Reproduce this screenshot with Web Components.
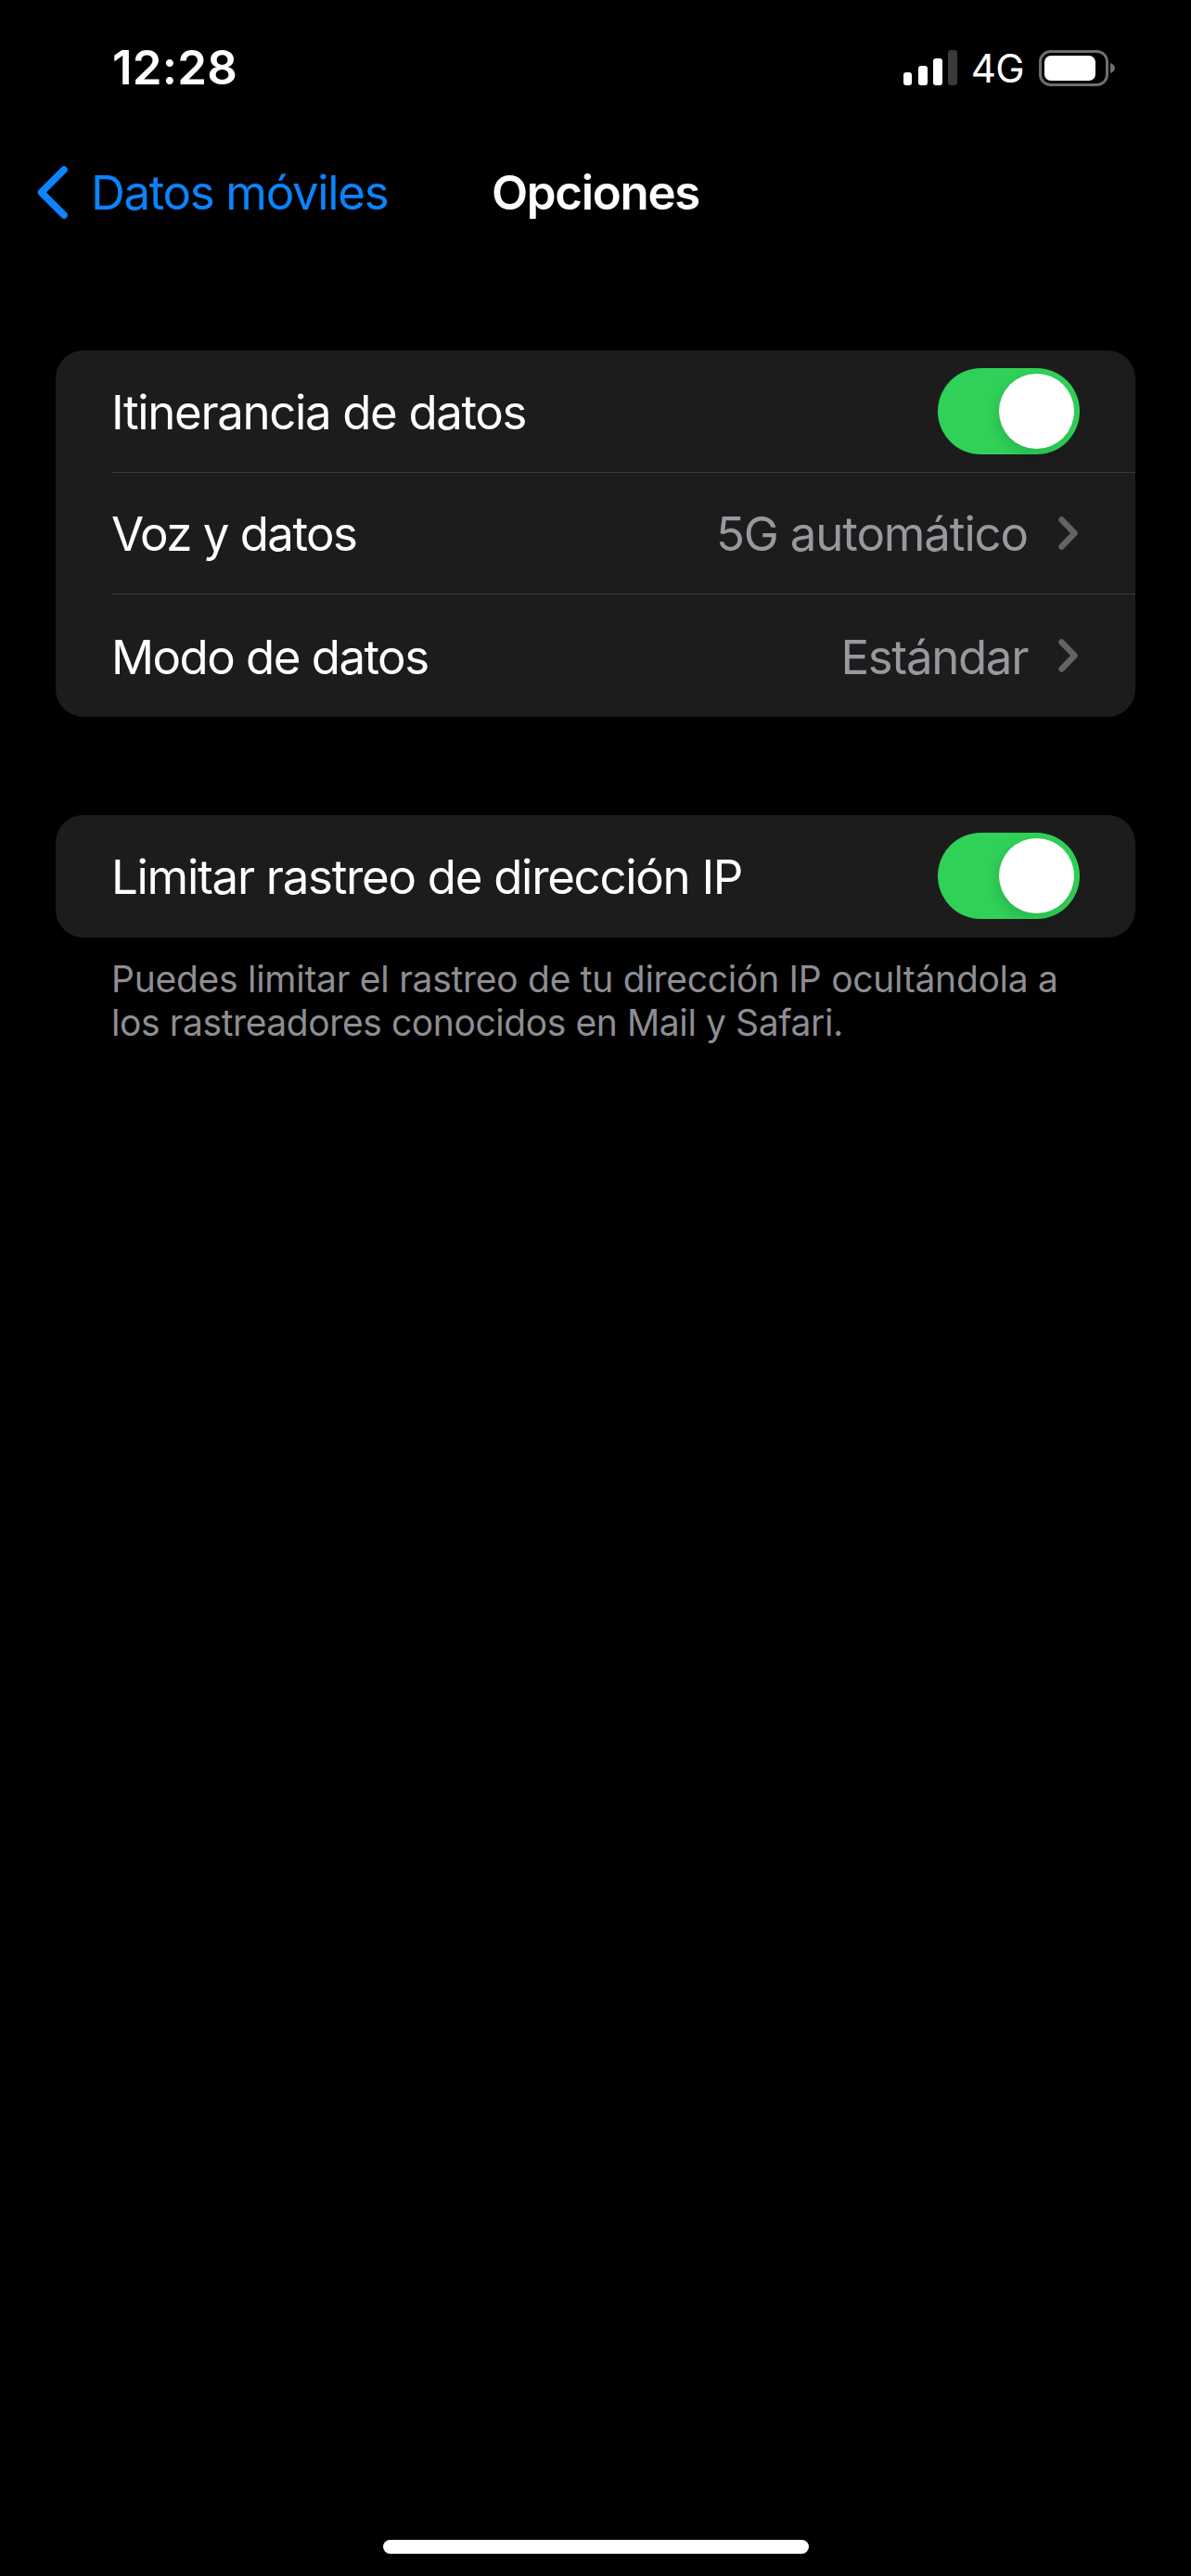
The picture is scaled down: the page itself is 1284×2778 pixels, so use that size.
<!DOCTYPE html>
<html lang="es">
<head>
<meta charset="utf-8">
<title>Opciones</title>
<style>
  html, body { margin: 0; background: #000; }
  body { font-family: Inter, "Noto Sans", sans-serif; color: #fff; }
  #page { display: flex; flex-direction: column; min-height: 2778px; }
</style>
</head>
<body>
<div id="page">
  <status-bar time="12:28" network="4G"></status-bar>
  <nav-bar back="Datos móviles" heading="Opciones"></nav-bar>

  <settings-group style="margin-top:142px">
    <settings-row tracking="-1.38"><span slot="label">Itinerancia de datos</span><on-toggle></on-toggle></settings-row>
    <settings-row tracking="-1.55" value="5G automático" value-tracking="-1.15"><span slot="label">Voz y datos</span></settings-row>
    <settings-row tracking="-1.55" value="Estándar" value-tracking="-1.35"><span slot="label">Modo de datos</span></settings-row>
  </settings-group>

  <settings-group style="margin-top:106px">
    <settings-row tracking="-1.31"><span slot="label">Limitar rastreo de dirección IP</span><on-toggle></on-toggle></settings-row>
  </settings-group>
  <group-note>
    <div style="letter-spacing:-.27px">Puedes limitar el rastreo de tu dirección IP ocultándola a</div>
    <div style="letter-spacing:-.41px">los rastreadores conocidos en Mail y Safari.</div>
  </group-note>

  <home-indicator></home-indicator>
</div>

<script>
class StatusBar extends HTMLElement {
    connectedCallback() {
        this.attachShadow({mode:"open"}).innerHTML = `
        <style>
        :host {
            display: flex;
            align-items: center;
            justify-content: space-between;
            height: 60px;
            padding: 43px 82px 0 121px;
        }
        .time { font-size: 51px; font-weight: 600; letter-spacing: .2px; line-height: 60px; }
        .right { display: flex; align-items: center; }
        .net { font-size: 42px; letter-spacing: -.6px; line-height: 60px; margin: 1px 16px 0 15px; }
        svg { display: block; }
        </style>
        <span class="time">${this.getAttribute("time")}</span>
        <div class="right">
            <svg width="58" height="38" viewBox="0 0 58 38">
                <rect x="0" y="24" width="9" height="14" rx="3" fill="#fff"/>
                <rect x="16" y="17" width="10" height="21" rx="3" fill="#fff"/>
                <rect x="32" y="9" width="10" height="29" rx="3" fill="#fff"/>
                <rect x="48" y="0" width="10" height="38" rx="3" fill="#3a3a3c"/>
            </svg>
            <span class="net">${this.getAttribute("network")}</span>
            <svg width="82" height="39" viewBox="0 0 82 39">
                <rect x="1.5" y="1.5" width="72" height="36" rx="11" fill="none" stroke="#6e6e6e" stroke-width="3"/>
                <rect x="6" y="6" width="55" height="27" rx="7" fill="#fff"/>
                <path d="M77 14c3 1 5 3 5 5.5s-2 4.500-5 5.500z" fill="#6e6e6e"/>
            </svg>
        </div>`;
    }
}

class NavBar extends HTMLElement {
    connectedCallback() {
        this.attachShadow({mode:"open"}).innerHTML = `
        <style>
        :host {
            display: grid;
            grid-template-columns: 1fr auto 1fr;
            align-items: center;
            margin-top: 73px;
            height: 60px;
            font-size: 51px;
            line-height: 60px;
        }
        .back {
            display: flex;
            align-items: center;
            gap: 25px;
            padding-left: 40px;
            color: #0a84ff;
            letter-spacing: -1.35px;
            white-space: nowrap;
        }
        .back span { padding-top: 2px; }
        h1 { margin: 0; padding-top: 2px; font: inherit; font-weight: 600; letter-spacing: -1.3px; }
        svg { display: block; flex: none; }
        </style>
        <div class="back">
            <svg width="33" height="57" viewBox="0 0 33 57">
                <path d="M29 4 4.500 28.500 29 53" fill="none" stroke="#0a84ff" stroke-width="7.500" stroke-linecap="round" stroke-linejoin="round"/>
            </svg>
            <span>${this.getAttribute("back")}</span>
        </div>
        <h1>${this.getAttribute("heading")}</h1>
        <span></span>`;
    }
}

class SettingsGroup extends HTMLElement {
    connectedCallback() {
        this.attachShadow({mode:"open"}).innerHTML = `
        <style>
        :host {
            display: block;
            margin: 0 60px;
            border-radius: 30px;
            overflow: hidden;
            background: #1c1c1d;
        }
        </style>
        <slot></slot>`;
    }
}

class SettingsRow extends HTMLElement {
    connectedCallback() {
        const value = this.getAttribute("value");
        this.attachShadow({mode:"open"}).innerHTML = `
        <style>
        :host {
            display: block;
            height: 131.67px;
            padding-left: 60px;
            font-size: 51px;
            line-height: 60px;
        }
        .inner {
            box-sizing: border-box;
            height: 100%;
            display: flex;
            align-items: center;
            justify-content: space-between;
            padding-right: 60px;
            border-bottom: 1.5px solid #38383a;
        }
        :host(:last-child) .inner { border-bottom: 0; }
        .label { padding-top: 3px; letter-spacing: ${this.getAttribute("tracking")}px; white-space: nowrap; }
        .value {
            display: flex;
            align-items: center;
            gap: 33px;
            padding-right: 2px;
            color: #98989f;
            letter-spacing: ${this.getAttribute("value-tracking")}px;
        }
        .value span { padding-top: 3px; }
        svg { display: block; }
        </style>
        <div class="inner">
            <span class="label"><slot name="label"></slot></span>
            ${value ? `<span class="value"><span>${value}</span>
                <svg width="21" height="36" viewBox="0 0 21 36">
                    <path d="M3.500 3.500 17.500 18 3.500 32.500" fill="none" stroke="#636367" stroke-width="6.500" stroke-linecap="round" stroke-linejoin="round"/>
                </svg>
            </span>` : `<slot></slot>`}
        </div>`;
    }
}

class OnToggle extends HTMLElement {
    connectedCallback() {
        this.attachShadow({mode:"open"}).innerHTML = `
        <style>
        :host {
            box-sizing: border-box;
            display: flex;
            justify-content: flex-end;
            width: 153px;
            height: 93px;
            padding: 6px;
            border-radius: 47px;
            background: #30d158;
        }
        .knob {
            width: 81px;
            height: 81px;
            border-radius: 50%;
            background: #fff;
            box-shadow: -3px 6px 14px rgba(0, 0, 0, .12);
        }
        </style>
        <div class="knob"></div>`;
    }
}

class GroupNote extends HTMLElement {
    connectedCallback() {
        this.attachShadow({mode:"open"}).innerHTML = `
        <style>
        :host {
            display: block;
            margin-top: 21px;
            padding-left: 120px;
            font-size: 39px;
            line-height: 47.500px;
            color: #8e8e93;
            white-space: nowrap;
        }
        </style>
        <slot></slot>`;
    }
}

class HomeIndicator extends HTMLElement {
    connectedCallback() {
        this.attachShadow({mode:"open"}).innerHTML = `
        <style>
        :host {
            display: block;
            align-self: center;
            width: 459px;
            height: 15px;
            margin-top: auto;
            margin-bottom: 24px;
            border-radius: 8px;
            background: #fff;
        }
        </style>`;
    }
}

customElements.define("status-bar", StatusBar);
customElements.define("nav-bar", NavBar);
customElements.define("settings-group", SettingsGroup);
customElements.define("settings-row", SettingsRow);
customElements.define("on-toggle", OnToggle);
customElements.define("group-note", GroupNote);
customElements.define("home-indicator", HomeIndicator);
</script>
</body>
</html>
